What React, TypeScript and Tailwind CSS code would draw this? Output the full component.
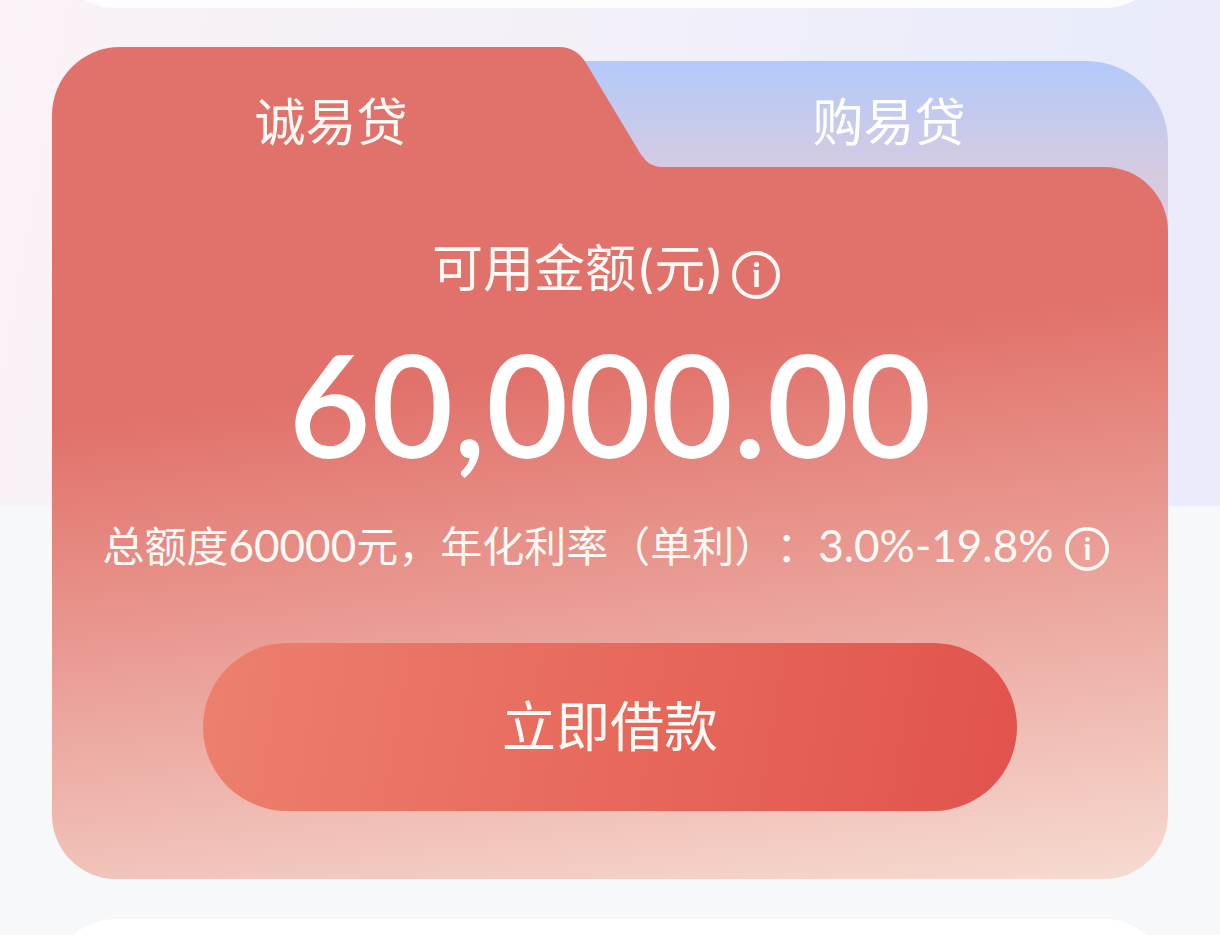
import type { ReactNode } from 'react';

function InfoIcon({ className }: { className: string }) {
    return (
        <svg viewBox="0 0 48 48" fill="none" stroke="currentColor" className={className} aria-hidden="true">
            <circle cx="24" cy="24" r="22" strokeWidth="4" />
            <path d="M24.5 19V36" strokeWidth="4.5" />
            <path d="M21.5 20H24" strokeWidth="2.5" />
            <circle cx="24.5" cy="13.5" r="2.6" fill="currentColor" stroke="none" />
        </svg>
    );
}

function InfoButton({ label, children }: { label: string; children: ReactNode }) {
    return (
        <button type="button" aria-label={label} className="shrink-0">
            {children}
        </button>
    );
}

function Digits({ children }: { children: ReactNode }) {
    return <span className="font-['Lato',sans-serif] text-[44px] leading-none">{children}</span>;
}

function Tabs() {
    return (
        <div role="tablist" className="flex h-[120px] text-[51px] leading-[72px]">
            <button type="button" role="tab" aria-selected="true" className="relative z-10 flex w-1/2 justify-center pt-10">
                <span className="absolute inset-0 -mr-14 flex">
                    <span className="flex-1 rounded-tl-[68px] bg-[#e1726b]" />
                    <svg viewBox="0 0 115 120" className="h-[120px] w-[115px] shrink-0 text-[#e1726b]" fill="currentColor" aria-hidden="true">
                        <path d="M0 0H8C20 0 29 6 35 16L86 101C92 112 99 120 111 120H0Z" />
                    </svg>
                </span>
                <span className="relative">诚易贷</span>
            </button>
            {/* runs on under the rounded corner of the panel */}
            <button
                type="button"
                role="tab"
                aria-selected="false"
                className="-mb-20 -ml-10 mt-[14px] flex flex-1 items-start justify-center rounded-tr-[82px] bg-linear-to-b from-[#b3c9fa] via-[#d5cbe1] via-60% to-[#dccbe4] pl-10 pt-[26px] text-white"
            >
                购易贷
            </button>
        </div>
    );
}

export default function App() {
    return (
        <main className="flex min-h-screen flex-col bg-[#f6f8fa] bg-[linear-gradient(100deg,#faf2f6,#f3f0f8_45%,#e9ecfb_85%,#ebebfa)] bg-[length:100%_506px] bg-no-repeat px-[52px] font-['Inter','Noto_Sans_CJK_SC',sans-serif] text-[#fffaf5]">
            <div className="flex h-2 flex-col justify-end overflow-hidden">
                <div className="h-16 shrink-0 rounded-b-[64px] bg-[#fdfdff]" />
            </div>

            <section className="mt-[39px]">
                <Tabs />
                <div className="relative z-10 flex flex-col items-center rounded-b-[64px] rounded-tr-[64px] bg-[linear-gradient(173deg,#e1726b_31%,#f6dbd1)] pb-[68px] pt-16">
                    <div className="flex items-center gap-2 pr-2 text-[51px] leading-[76px]">
                        <h2>可用金额(元)</h2>
                        <InfoButton label="可用金额">
                            <InfoIcon className="mt-3 size-12" />
                        </InfoButton>
                    </div>
                    <p className="mt-6 font-['Lato',sans-serif] text-[142px] font-semibold leading-[144px] text-white">60,000.00</p>
                    <div className="mt-10 flex items-center gap-3 pr-2 text-[42px] leading-[64px]">
                        <p className="whitespace-nowrap [text-spacing-trim:space-all]">
                            总额度<Digits>60000</Digits>元，年化利率（单利）：<Digits>3.0%-19.8%</Digits>
                        </p>
                        <InfoButton label="年化利率">
                            <InfoIcon className="mt-1 size-11" />
                        </InfoButton>
                    </div>
                    <button
                        type="button"
                        className="mt-16 h-[168px] w-[73%] rounded-full bg-[linear-gradient(100deg,#ed806d,#e1534c)] text-[54px]"
                    >
                        立即借款
                    </button>
                </div>
            </section>

            <div className="mt-10 h-4 overflow-hidden">
                <div className="h-32 rounded-t-[64px] bg-white" />
            </div>
        </main>
    );
}
